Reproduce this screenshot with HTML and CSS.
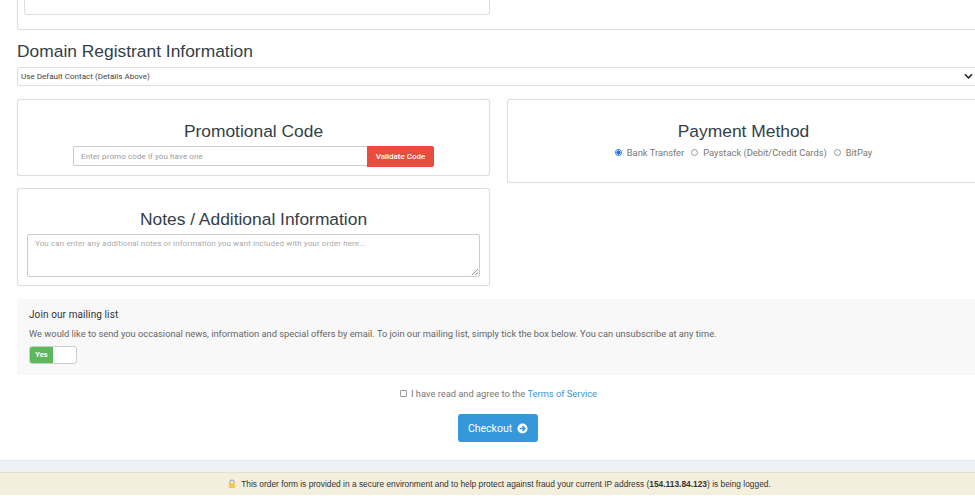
FILE: index.html
```html
<!DOCTYPE html>
<html lang="en">
<head>
<meta charset="utf-8">
<title>Checkout</title>
<link rel="stylesheet" href="styles.css">
</head>
<body>
<div class="page">
  <main class="content">
    <section class="box top-box"><div class="inner-box"></div></section>
    <h2 class="section-title">Domain Registrant Information</h2>
    <div class="select">
      <span>Use Default Contact (Details Above)</span>
      <svg class="chevron" viewBox="0 0 10 6" aria-hidden="true"><path d="M1 1l4 4 4-4" fill="none" stroke="#222" stroke-width="1.7"/></svg>
    </div>
    <div class="columns">
      <div class="col">
        <section class="box promo-box">
          <h3 class="box-title">Promotional Code</h3>
          <div class="promo-row">
            <div class="promo-input">Enter promo code if you have one</div>
            <button class="validate">Validate Code</button>
          </div>
        </section>
        <section class="box notes-box">
          <h3 class="box-title">Notes / Additional Information</h3>
          <div class="textarea">You can enter any additional notes or information you want included with your order here...
            <svg class="grip" viewBox="0 0 8 8" aria-hidden="true"><path d="M1 8l7-7M5 8l3-3" stroke="#777" stroke-width="1"/></svg>
          </div>
        </section>
      </div>
      <div class="col">
        <section class="box pay-box">
          <h3 class="box-title">Payment Method</h3>
          <div class="pay-row">
            <label class="pay-opt"><span class="radio on"></span>Bank Transfer</label>
            <label class="pay-opt"><span class="radio"></span>Paystack (Debit/Credit Cards)</label>
            <label class="pay-opt"><span class="radio"></span>BitPay</label>
          </div>
        </section>
      </div>
    </div>
    <section class="mailing">
      <h4 class="mailing-title">Join our mailing list</h4>
      <p class="mailing-text">We would like to send you occasional news, information and special offers by email. To join our mailing list, simply tick the box below. You can unsubscribe at any time.</p>
      <div class="toggle"><span class="toggle-on">Yes</span><span class="toggle-off"></span></div>
    </section>
    <div class="agree"><span class="check"></span>I have read and agree to the&nbsp;<a class="link" href="#">Terms of Service</a></div>
    <div class="checkout-row">
      <button class="checkout">Checkout
        <svg class="arrow" viewBox="0 0 12 12" aria-hidden="true"><circle cx="6" cy="6" r="5.5" fill="#fff"/><path d="M3 6h5.4M6 3.4L8.6 6 6 8.6" fill="none" stroke="#3498db" stroke-width="1.6"/></svg>
      </button>
    </div>
  </main>
  <div class="band"></div>
  <footer class="notice">
    <svg class="lock" viewBox="0 0 10 12" aria-hidden="true"><path d="M2.5 5.5V3.6a2.5 2.5 0 0 1 5 0v1.9" fill="none" stroke="#a5a5a0" stroke-width="1.3"/><rect x="1" y="5" width="8" height="6" rx="1" fill="#ecc94f"/></svg>
    <span>This order form is provided in a secure environment and to help protect against fraud your current IP address (<strong>154.113.84.123</strong>) is being logged.</span>
  </footer>
</div>
</body>
</html>
```
FILE: styles.css
```css
* { box-sizing: border-box; }
html, body { margin: 0; height: 100%; overflow: hidden; background: #fff; }
body { font-family: Roboto, "Liberation Sans", sans-serif; color: #666; }
.page { width: 975px; height: 496px; overflow: hidden; }
.content { width: 963px; margin-left: 17px; height: 480px; }
.box { border: 1px solid #ddd; border-radius: 3px; background: #fff; box-shadow: 0 0 1px #ddd; }
.top-box { height: 50px; margin-top: -20px; padding: 0 0 0 6px; }
.inner-box { width: 466px; height: 34px; border: 1px solid #ddd; border-top: 0; border-radius: 3px; }
.section-title { margin: 11px 0 6px; font: 400 17.4px/20px "Liberation Sans", sans-serif; color: #333f48; }
.select { height: 19px; border: 1px solid #ddd; border-radius: 2px; display: flex; align-items: center; justify-content: space-between; padding: 0 0 1px 3px; font-size: 8.1px; color: #444; }
.chevron { width: 9px; height: 6px; margin-right: 1px; position: relative; left: -5px; }
.columns { display: grid; grid-template-columns: 473px 473px; column-gap: 17px; margin-top: 13px; align-items: start; }
.col { display: flex; flex-direction: column; }
.promo-box { height: 77px; padding-top: 21px; }
.pay-box { height: 84px; padding-top: 21px; }
.notes-box { height: 98px; margin-top: 12px; padding: 20px 9px 0; }
.box-title { margin: 0; text-align: center; font: 400 17.4px/21px "Liberation Sans", sans-serif; color: #333f48; }
.promo-row { display: flex; width: 361px; margin: 4px auto 0 55px; align-items: flex-start; }
.promo-input { width: 294px; height: 20px; border: 1px solid #ccc; border-right: 0; border-radius: 2px 0 0 2px; padding-left: 7px; font-size: 8px; line-height: 19px; color: #999; letter-spacing: .1px; }
.validate { width: 67px; height: 21px; border: 0; border-radius: 0 2px 2px 0; background: #e74c3c; color: #fff; font: 500 8px Roboto, sans-serif; padding: 0; }
.textarea { position: relative; height: 43px; margin-top: 4px; border: 1px solid #ccc; border-radius: 2px; padding: 4px 7px; font-size: 8px; color: #aaa; letter-spacing: .12px; }
.grip { position: absolute; right: 1px; bottom: 1px; width: 7px; height: 7px; }
.pay-row { display: flex; justify-content: center; gap: 7px; margin-top: 5px; font-size: 9.35px; color: #777; }
.pay-opt { display: flex; align-items: center; gap: 5px; }
.radio { width: 7px; height: 7px; border: 1px solid #999; border-radius: 50%; background: #fff; }
.radio.on { border-color: #1a73e8; background: radial-gradient(circle, #1a73e8 55%, #fff 60%); }
.mailing { height: 76px; margin-top: 13px; padding: 9px 12px; background: #f8f8f8; }
.mailing-title { margin: 0; font: 400 10px/14px Roboto, sans-serif; color: #333; letter-spacing: .1px; }
.mailing-text { margin: 5px 0 6px; font-size: 9.3px; line-height: 13px; color: #666; }
.toggle { display: flex; width: 48px; height: 18px; border: 1px solid #ccc; border-radius: 3px; overflow: hidden; background: #fff; }
.toggle-on { width: 23px; background: #5cb85c; color: #fff; font-size: 7.5px; font-weight: 700; line-height: 15px; text-align: center; }
.agree { display: flex; justify-content: center; align-items: center; margin-top: 11px; height: 14px; font-size: 9.3px; color: #777; }
.check { width: 7px; height: 7px; border: 1px solid #999; border-radius: 1px; margin-right: 4px; }
.link { color: #3498db; text-decoration: none; }
.checkout-row { display: flex; justify-content: center; margin-top: 14px; padding-right: 1px; }
.checkout { display: flex; align-items: center; justify-content: center; gap: 5px; width: 80px; height: 28px; border: 0; border-radius: 3px; background: #3498db; color: #fff; font: 400 10.5px Roboto, sans-serif; padding: 0; }
.arrow { width: 11px; height: 11px; }
.band { width: 999px; height: 12px; background: #eef1f5; border-top: 1px solid #e3e6ea; }
.notice { display: flex; justify-content: center; align-items: center; gap: 5px; width: 999px; height: 23px; background: #f3efdc; border-top: 1px solid #e6e2c8; font: 400 8.4px "Liberation Sans", sans-serif; color: #333; }
.lock { width: 8px; height: 10px; }
```
